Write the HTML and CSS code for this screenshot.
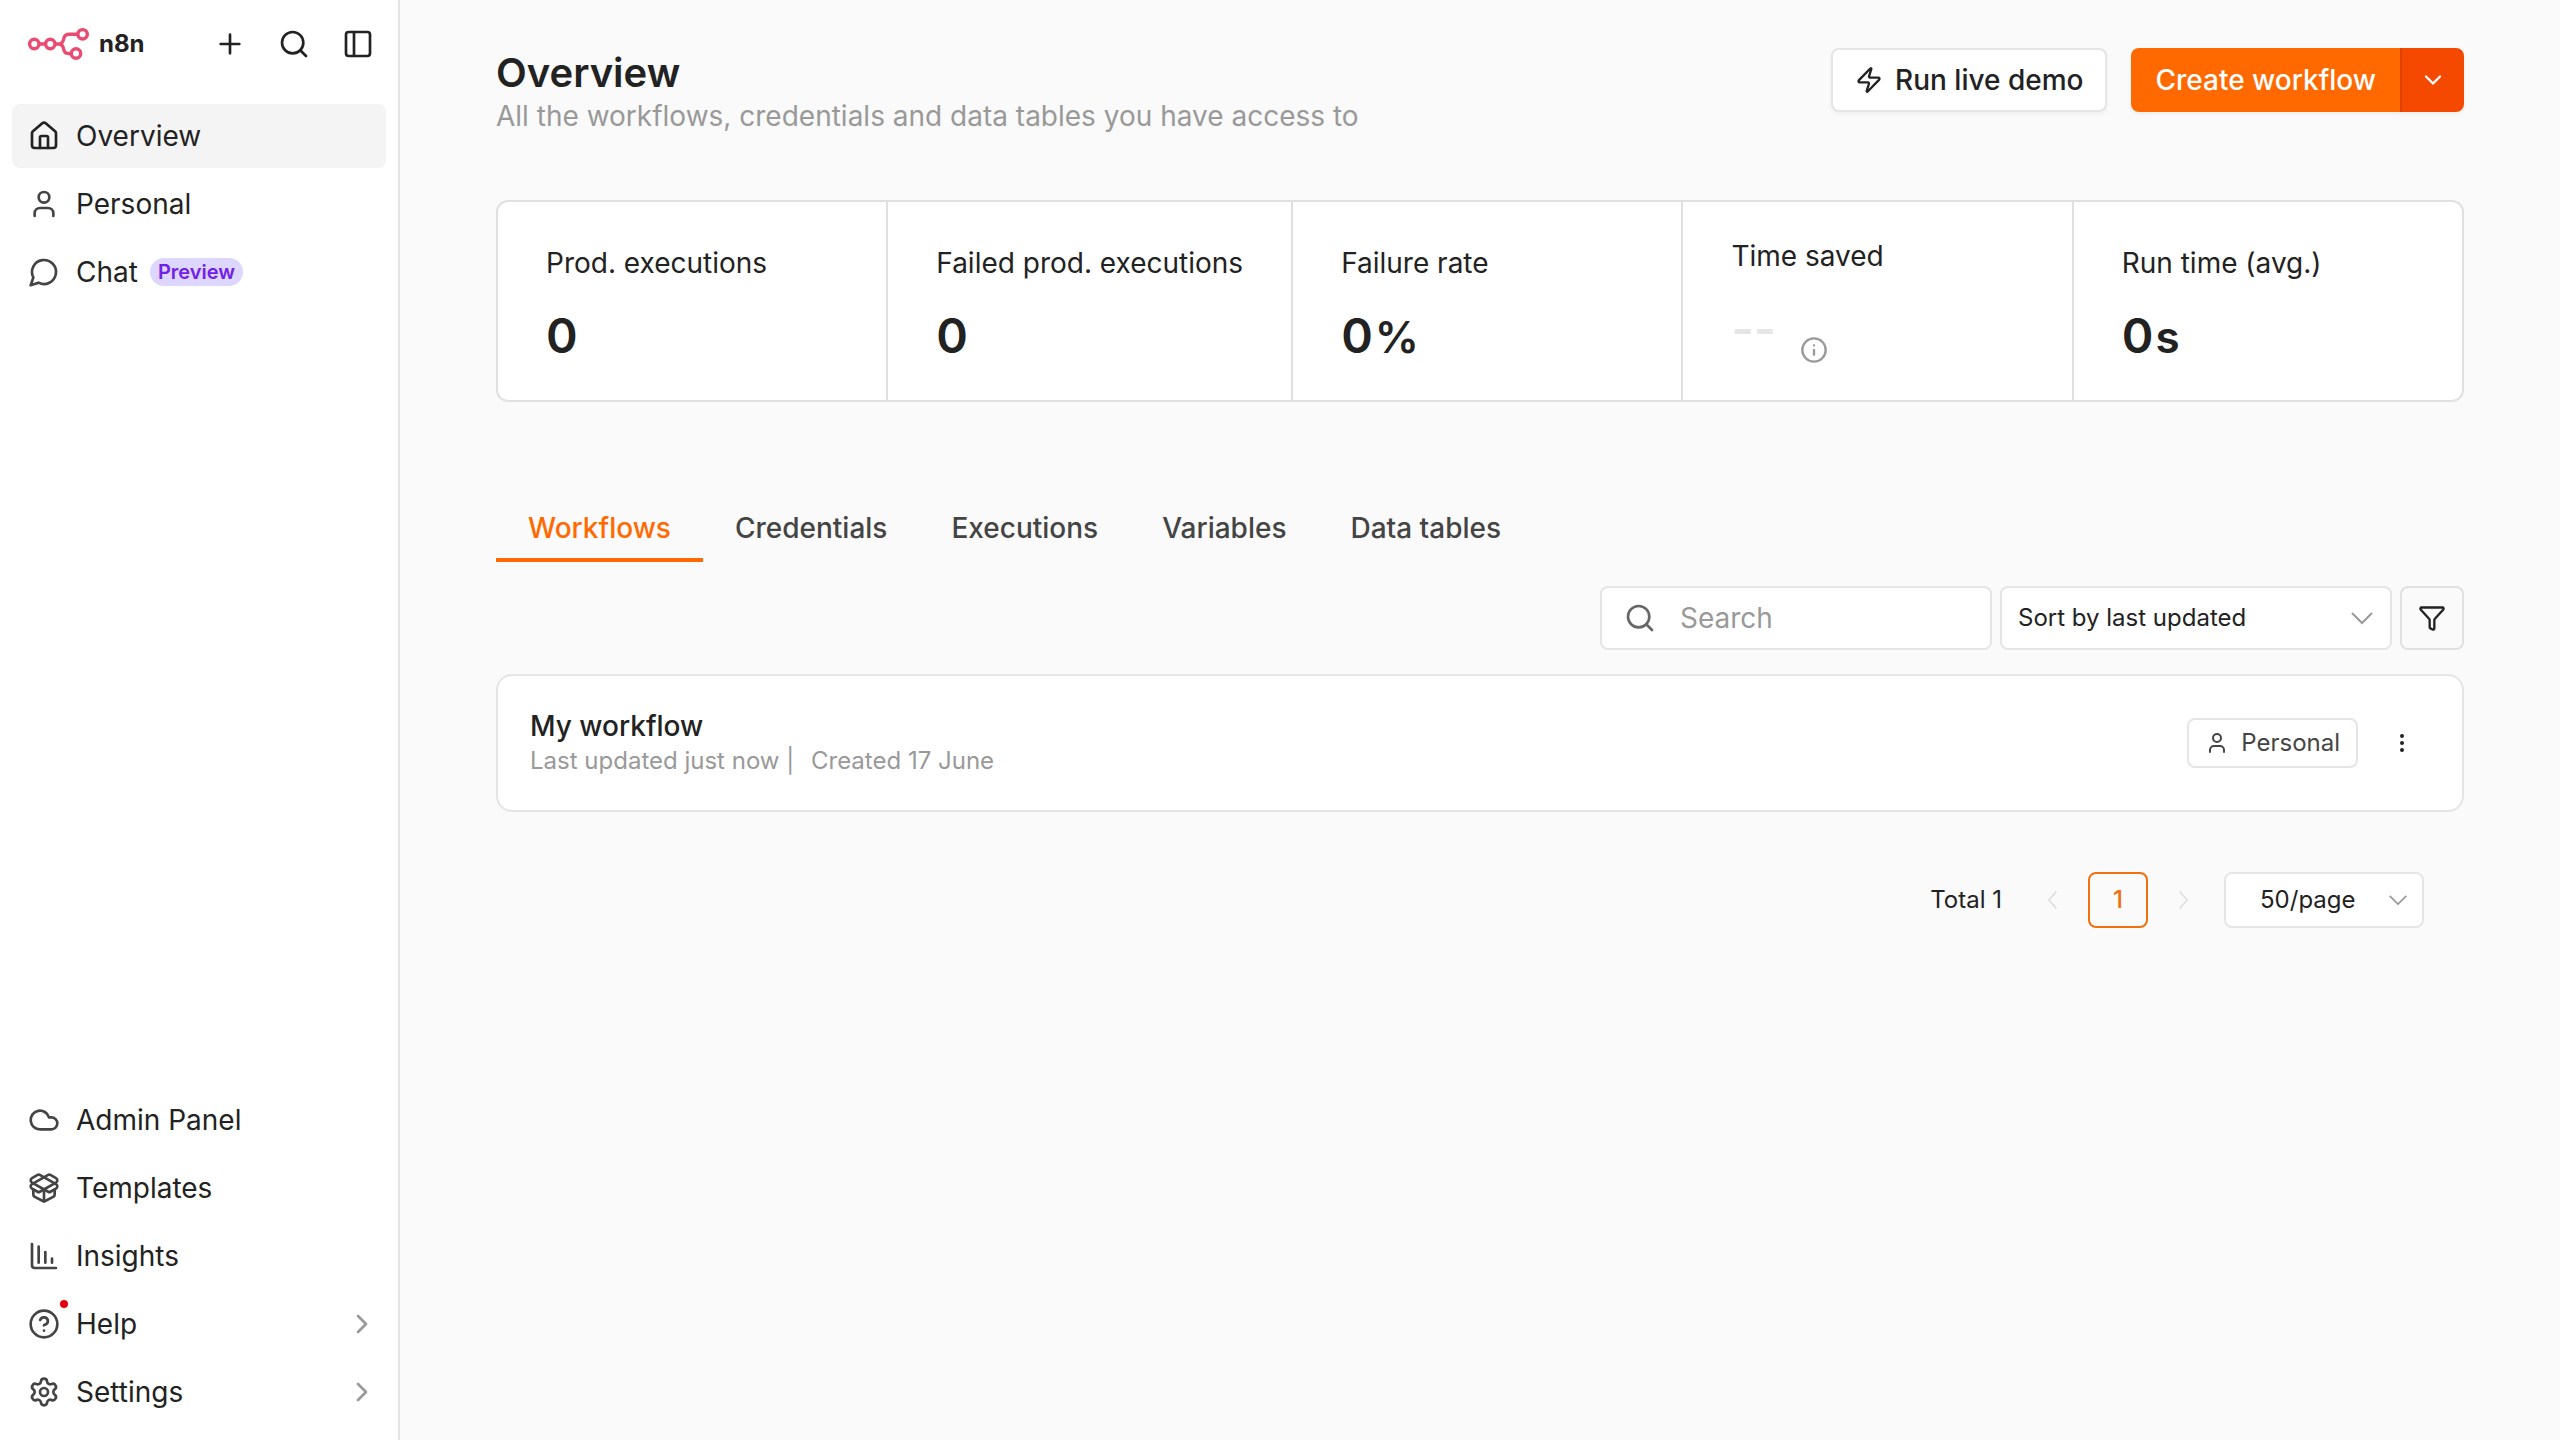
FILE: index.html
```html
<!DOCTYPE html>
<html lang="en">
<head>
    <meta charset="UTF-8">
    <meta name="viewport" content="width=device-width, initial-scale=1.0">
    <title>Overview - n8n</title>
    <link rel="stylesheet" href="styles.css">
</head>
<body>
    <div class="container">
        <aside class="sidebar">
            <div class="sidebar-header">
                <a href="#" class="logo">
                    <svg class="logo-mark" viewBox="0 0 64 34" aria-hidden="true">
                        <circle cx="7.3" cy="17" r="4.7"/>
                        <circle cx="23.3" cy="17" r="4.7"/>
                        <circle cx="55.6" cy="7.3" r="4.7"/>
                        <circle cx="49" cy="26.5" r="4.7"/>
                        <path d="M12 17h6.6M28 17h3.600c3 0 4.300-1.600 4.800-4.200.6-3.600 2-5.500 5.600-5.500h8.900M31.600 17c3 0 4.300 1.600 4.800 4.200.6 3.600 2 5.300 5 5.300h3"/>
                    </svg>
                    <span class="logo-text">n8n</span>
                </a>
                <div class="sidebar-actions">
                    <button type="button" aria-label="Add">
                        <svg class="icon" viewBox="0 0 24 24"><path d="M5 12h14M12 5v14"/></svg>
                    </button>
                    <button type="button" aria-label="Search">
                        <svg class="icon" viewBox="0 0 24 24"><circle cx="11" cy="11" r="8"/><path d="m21 21-4.300-4.300"/></svg>
                    </button>
                    <button type="button" aria-label="Toggle sidebar">
                        <svg class="icon" viewBox="0 0 24 24"><rect x="3" y="3" width="18" height="18" rx="2"/><path d="M9 3v18"/></svg>
                    </button>
                </div>
            </div>
            <nav class="menu">
                <a href="#" class="menu-item active">
                    <svg class="icon" viewBox="0 0 24 24"><path d="M15 21v-8a1 1 0 0 0-1-1h-4a1 1 0 0 0-1 1v8"/><path d="M3 10a2 2 0 0 1 .709-1.528l7-5.999a2 2 0 0 1 2.582 0l7 5.999A2 2 0 0 1 21 10v9a2 2 0 0 1-2 2H5a2 2 0 0 1-2-2z"/></svg>
                    <span>Overview</span>
                </a>
                <a href="#" class="menu-item">
                    <svg class="icon" viewBox="0 0 24 24"><path d="M19 21v-2a4 4 0 0 0-4-4H9a4 4 0 0 0-4 4v2"/><circle cx="12" cy="7" r="4"/></svg>
                    <span>Personal</span>
                </a>
                <a href="#" class="menu-item">
                    <svg class="icon" viewBox="0 0 24 24"><path d="M7.900 20A9 9 0 1 0 4 16.100L2 22Z"/></svg>
                    <span>Chat</span>
                    <span class="badge">Preview</span>
                </a>
            </nav>
            <nav class="menu menu-bottom">
                <a href="#" class="menu-item">
                    <svg class="icon" viewBox="0 0 24 24"><path d="M17.500 19H9a7 7 0 1 1 6.710-9h1.790a4.500 4.500 0 1 1 0 9Z"/></svg>
                    <span>Admin Panel</span>
                </a>
                <a href="#" class="menu-item">
                    <svg class="icon" viewBox="0 0 24 24"><path d="M12 22v-9"/><path d="M15.170 2.210a1.670 1.670 0 0 1 1.630 0L21 4.570a1.930 1.930 0 0 1 0 3.360L8.820 14.790a1.655 1.655 0 0 1-1.640 0L3 12.430a1.930 1.930 0 0 1 0-3.360z"/><path d="M20 13v3.870a2.060 2.060 0 0 1-1.110 1.830l-6 3.080a1.930 1.930 0 0 1-1.780 0l-6-3.080A2.060 2.060 0 0 1 4 16.870V13"/><path d="M21 12.430a1.930 1.930 0 0 0 0-3.360L8.830 2.200a1.640 1.640 0 0 0-1.630 0L3 4.570a1.930 1.930 0 0 0 0 3.360l12.180 6.860a1.636 1.636 0 0 0 1.630 0z"/></svg>
                    <span>Templates</span>
                </a>
                <a href="#" class="menu-item">
                    <svg class="icon" viewBox="0 0 24 24"><path d="M3 3v16a2 2 0 0 0 2 2h16"/><path d="M8 5v12M13 9v8M18 14v3"/></svg>
                    <span>Insights</span>
                </a>
                <a href="#" class="menu-item">
                    <svg class="icon" viewBox="0 0 24 24"><circle cx="12" cy="12" r="10"/><path d="M9.090 9a3 3 0 0 1 5.830 1c0 2-3 3-3 3"/><path d="M12 17h.01"/></svg>
                    <span>Help</span>
                    <svg class="icon chevron" viewBox="0 0 24 24"><path d="m9 18 6-6-6-6"/></svg>
                    <span class="dot"></span>
                </a>
                <a href="#" class="menu-item">
                    <svg class="icon" viewBox="0 0 24 24"><path d="M9.671 4.136a2.340 2.340 0 0 1 4.659 0 2.340 2.340 0 0 0 3.319 1.915 2.340 2.340 0 0 1 2.330 4.033 2.340 2.340 0 0 0 0 3.831 2.340 2.340 0 0 1-2.330 4.033 2.340 2.340 0 0 0-3.319 1.915 2.340 2.340 0 0 1-4.659 0 2.340 2.340 0 0 0-3.320-1.915 2.340 2.340 0 0 1-2.330-4.033 2.340 2.340 0 0 0 0-3.831A2.340 2.340 0 0 1 6.350 6.051a2.340 2.340 0 0 0 3.319-1.915"/><circle cx="12" cy="12" r="3"/></svg>
                    <span>Settings</span>
                    <svg class="icon chevron" viewBox="0 0 24 24"><path d="m9 18 6-6-6-6"/></svg>
                </a>
            </nav>
        </aside>

        <main class="main-content">
            <header class="page-header">
                <div>
                    <h1>Overview</h1>
                    <p>All the workflows, credentials and data tables you have access to</p>
                </div>
                <div class="header-actions">
                    <button type="button" class="btn">
                        <svg class="icon" viewBox="0 0 24 24"><path d="M4 14a1 1 0 0 1-.78-1.630l9.900-10.200a.5.5 0 0 1 .86.460l-1.920 6.020A1 1 0 0 0 13 10h7a1 1 0 0 1 .78 1.630l-9.900 10.200a.5.5 0 0 1-.86-.46l1.920-6.020A1 1 0 0 0 11 14z"/></svg>
                        Run live demo
                    </button>
                    <div class="btn-group">
                        <button type="button" class="btn-primary">Create workflow</button>
                        <button type="button" class="btn-more" aria-label="More create options">
                            <svg class="icon" viewBox="0 0 24 24"><path d="m6 9 6 6 6-6"/></svg>
                        </button>
                    </div>
                </div>
            </header>

            <section class="stats">
                <a href="#" class="stat">
                    <span class="stat-label">Prod. executions</span>
                    <strong class="stat-value">0</strong>
                </a>
                <a href="#" class="stat">
                    <span class="stat-label">Failed prod. executions</span>
                    <strong class="stat-value">0</strong>
                </a>
                <a href="#" class="stat">
                    <span class="stat-label">Failure rate</span>
                    <strong class="stat-value">0<em>%</em></strong>
                </a>
                <a href="#" class="stat">
                    <span class="stat-label">Time saved</span>
                    <span class="stat-empty">
                        <strong class="stat-value">--</strong>
                        <svg class="icon" viewBox="0 0 24 24"><circle cx="12" cy="12" r="10"/><path d="M12 16v-4M12 8h.01"/></svg>
                    </span>
                </a>
                <a href="#" class="stat">
                    <span class="stat-label">Run time (avg.)</span>
                    <strong class="stat-value">0<em>s</em></strong>
                </a>
            </section>

            <nav class="tabs">
                <a href="#" class="tab active">Workflows</a>
                <a href="#" class="tab">Credentials</a>
                <a href="#" class="tab">Executions</a>
                <a href="#" class="tab">Variables</a>
                <a href="#" class="tab">Data tables</a>
            </nav>

            <div class="filters">
                <label class="search">
                    <svg class="icon" viewBox="0 0 24 24"><circle cx="11" cy="11" r="8"/><path d="m21 21-4.300-4.300"/></svg>
                    <input type="text" placeholder="Search" aria-label="Search workflows">
                </label>
                <div class="select sort">
                    <select aria-label="Sort workflows">
                        <option>Sort by last updated</option>
                        <option>Sort by last created</option>
                        <option>Sort by name (A-Z)</option>
                    </select>
                    <svg class="arrow" viewBox="0 0 24 24"><path d="m2 7 10 10L22 7"/></svg>
                </div>
                <button type="button" class="filter-btn" aria-label="Filters">
                    <svg class="icon" viewBox="0 0 24 24"><path d="M10 20a1 1 0 0 0 .553.895l2 1A1 1 0 0 0 14 21v-7a2 2 0 0 1 .517-1.341L21.740 4.670A1 1 0 0 0 21 3H3a1 1 0 0 0-.742 1.670l7.225 7.989A2 2 0 0 1 10 14z"/></svg>
                </button>
            </div>

            <article class="card">
                <div>
                    <h2>My workflow</h2>
                    <p><span>Last updated just now |</span> <span class="created">Created 17 June</span></p>
                </div>
                <div class="card-actions">
                    <span class="owner">
                        <svg class="icon" viewBox="0 0 24 24"><path d="M19 21v-2a4 4 0 0 0-4-4H9a4 4 0 0 0-4 4v2"/><circle cx="12" cy="7" r="4"/></svg>
                        Personal
                    </span>
                    <button type="button" class="kebab" aria-label="Workflow actions">
                        <svg class="icon" viewBox="0 0 24 24"><circle cx="12" cy="12" r="1"/><circle cx="12" cy="5" r="1"/><circle cx="12" cy="19" r="1"/></svg>
                    </button>
                </div>
            </article>

            <div class="pagination">
                <span>Total 1</span>
                <div class="pager">
                    <button type="button" disabled aria-label="Previous page">
                        <svg class="arrow" viewBox="0 0 24 24"><path d="M16 2 7 12l9 10"/></svg>
                    </button>
                    <button type="button" class="page">1</button>
                    <button type="button" disabled aria-label="Next page">
                        <svg class="arrow" viewBox="0 0 24 24"><path d="m8 2 9 10-9 10"/></svg>
                    </button>
                </div>
                <div class="select page-size">
                    <select aria-label="Page size">
                        <option>50/page</option>
                        <option>100/page</option>
                    </select>
                    <svg class="arrow" viewBox="0 0 24 24"><path d="m2 7 10 10L22 7"/></svg>
                </div>
            </div>
        </main>
    </div>
</body>
</html>
```

FILE: styles.css
```css
* {
    box-sizing: border-box;
    margin: 0;
    padding: 0;
}
body {
    font-family: Inter, sans-serif;
    font-size: 28px;
    line-height: 36px;
    color: #222;
    background: #fafafa;
}
a {
    color: inherit;
    text-decoration: none;
}
button, input, select {
    font: inherit;
    color: inherit;
    background: none;
    border: none;
}
button {
    display: flex;
    align-items: center;
    justify-content: center;
    cursor: pointer;
}
.icon {
    width: 32px;
    height: 32px;
    flex-shrink: 0;
    fill: none;
    stroke: currentColor;
    stroke-width: 2;
    stroke-linecap: round;
    stroke-linejoin: round;
}
.container {
    display: flex;
    min-height: 100vh;
}

/* sidebar */
.sidebar {
    display: flex;
    flex-direction: column;
    flex-shrink: 0;
    width: 400px;
    padding: 12px 12px 16px;
    background: #fff;
    border-right: 2px solid #e5e5e5;
}
.sidebar-header {
    display: flex;
    align-items: center;
    justify-content: space-between;
    height: 64px;
    margin-bottom: 28px;
    padding-left: 15px;
}
.logo {
    display: flex;
    align-items: center;
    gap: 8px;
}
.logo-mark {
    width: 64px;
    height: 34px;
    fill: none;
    stroke: #ea4b71;
    stroke-width: 3.4;
}
.logo-text {
    font-size: 24px;
    font-weight: 700;
}
.sidebar-actions {
    display: flex;
    margin-right: -4px;
}
.sidebar-actions button {
    width: 64px;
    height: 64px;
}
.menu {
    display: flex;
    flex-direction: column;
    gap: 4px;
}
.menu-bottom {
    margin-top: auto;
}
.menu-item {
    position: relative;
    display: flex;
    align-items: center;
    height: 64px;
    padding: 0 8px 0 16px;
    border-radius: 8px;
}
.menu-item .icon {
    margin-right: 16px;
    color: #444;
}
.menu-item.active {
    background: #f4f4f4;
}
.menu-item.active .icon {
    color: #222;
}
.menu-item .chevron {
    margin: 0 0 0 auto;
    color: #999;
}
.badge {
    margin-left: 12px;
    padding: 0 8px;
    font-size: 20px;
    font-weight: 600;
    line-height: 28px;
    color: #7321e8;
    background: #ddd6fe;
    border-radius: 14px;
}
.dot {
    position: absolute;
    top: 8px;
    left: 48px;
    width: 8px;
    height: 8px;
    background: #e3000f;
    border-radius: 50%;
}

/* header */
.main-content {
    flex: 1;
    min-width: 0;
    padding: 48px 96px;
}
.page-header {
    display: flex;
    justify-content: space-between;
    margin-bottom: 66px;
}
.page-header h1 {
    font-size: 40px;
    font-weight: 600;
    line-height: 50px;
}
.page-header p {
    color: #999;
}
.header-actions {
    display: flex;
    align-items: flex-start;
    gap: 24px;
    font-weight: 500;
}
.btn {
    gap: 12px;
    height: 64px;
    padding: 0 22px;
    background: #fff;
    border: 2px solid #e5e5e5;
    border-radius: 8px;
    box-shadow: 0 2px 4px rgba(0, 0, 0, .05);
}
.btn .icon {
    width: 28px;
    height: 28px;
}
.btn-group {
    display: flex;
    height: 64px;
    color: #fff;
    border-radius: 8px;
    overflow: hidden;
    box-shadow: 0 2px 4px rgba(0, 0, 0, .05);
}
.btn-primary {
    padding: 0 24px;
    background: #ff6900;
}
.btn-more {
    width: 64px;
    background: #f54900;
    border-left: 2px solid #df4200;
}
.btn-more .icon {
    width: 28px;
    height: 28px;
}

/* stats */
.stats {
    display: flex;
    margin-bottom: 96px;
    background: #fff;
    border: 2px solid #e0e0e0;
    border-radius: 12px;
}
.stat {
    display: flex;
    flex: 1;
    flex-direction: column;
    justify-content: center;
    gap: 34px;
    height: 198px;
    padding: 0 48px;
    white-space: nowrap;
}
.stat + .stat {
    border-left: 2px solid #e0e0e0;
}
.stat-value {
    font-size: 48px;
    font-weight: 600;
    line-height: 42px;
}
.stat-value em {
    margin-left: 2px;
    font-size: 44px;
    font-style: normal;
}
.stat-empty {
    display: flex;
    align-items: flex-end;
    gap: 24px;
    height: 56px;
}
.stat-empty .stat-value {
    align-self: flex-start;
    color: #e5e5e5;
}
.stat-empty .icon {
    width: 28px;
    height: 28px;
    color: #999;
}

/* tabs */
.tabs {
    display: flex;
    margin-bottom: 24px;
    font-weight: 500;
    color: #444;
}
.tab {
    height: 64px;
    padding: 12px 32px;
    border-bottom: 4px solid transparent;
}
.tab.active {
    color: #ff6900;
    border-color: #ff6900;
}

/* search and sorting */
.filters {
    display: flex;
    justify-content: flex-end;
    gap: 8px;
    height: 64px;
    margin-bottom: 24px;
}
.search {
    display: flex;
    align-items: center;
    gap: 24px;
    width: 392px;
    padding: 0 22px;
    background: #fff;
    border: 2px solid #e5e5e5;
    border-radius: 8px;
}
.search .icon {
    color: #666;
}
.search input {
    flex: 1;
    min-width: 0;
    outline: none;
}
.search input::placeholder {
    color: #999;
    opacity: 1;
}
.select {
    position: relative;
    font-size: 24px;
    background: #fff;
    border: 2px solid #e5e5e5;
    border-radius: 8px;
}
.select select {
    width: 100%;
    height: 100%;
    padding: 0 16px;
    appearance: none;
    outline: none;
}
.arrow {
    width: 24px;
    height: 24px;
    fill: none;
    stroke: currentColor;
    stroke-width: 2;
}
.select .arrow {
    position: absolute;
    top: 50%;
    right: 16px;
    margin-top: -12px;
    color: #999;
    pointer-events: none;
}
.sort {
    width: 392px;
}
.filter-btn {
    width: 64px;
    border: 2px solid #e0e0e0;
    border-radius: 8px;
}
.filter-btn .icon {
    width: 28px;
    height: 28px;
}

/* workflow card */
.card {
    display: flex;
    align-items: center;
    justify-content: space-between;
    height: 138px;
    margin-bottom: 60px;
    padding: 0 32px;
    background: #fff;
    border: 2px solid #e5e5e5;
    border-radius: 16px;
}
.card h2 {
    font-size: 28px;
    font-weight: 500;
    line-height: 36px;
}
.card p {
    font-size: 24px;
    line-height: 34px;
    color: #999;
}
.created {
    margin-left: 10px;
}
.card-actions {
    display: flex;
    align-items: center;
    gap: 16px;
}
.owner {
    display: flex;
    align-items: center;
    gap: 12px;
    height: 50px;
    padding: 0 16px;
    font-size: 24px;
    color: #444;
    border: 2px solid #e5e5e5;
    border-radius: 8px;
}
.owner .icon {
    width: 24px;
    height: 24px;
}
.kebab {
    width: 56px;
    height: 56px;
}
.kebab .icon {
    width: 24px;
    height: 24px;
}

/* pagination */
.pagination {
    display: flex;
    align-items: center;
    justify-content: flex-end;
    height: 56px;
    padding-right: 40px;
    font-size: 24px;
}
.pager {
    display: flex;
    margin: 0 6px 0 16px;
}
.pager button {
    width: 70px;
    height: 56px;
    color: #e0e0e0;
}
.pager .arrow {
    width: 20px;
    height: 20px;
}
.pager .page {
    width: 60px;
    font-weight: 500;
    color: #f0700f;
    border: 2px solid #f0700f;
    border-radius: 8px;
}
.page-size {
    width: 200px;
    height: 56px;
}
.page-size select {
    padding-left: 34px;
}
.page-size .arrow {
    right: 14px;
    width: 20px;
    height: 20px;
    margin-top: -10px;
}
```
